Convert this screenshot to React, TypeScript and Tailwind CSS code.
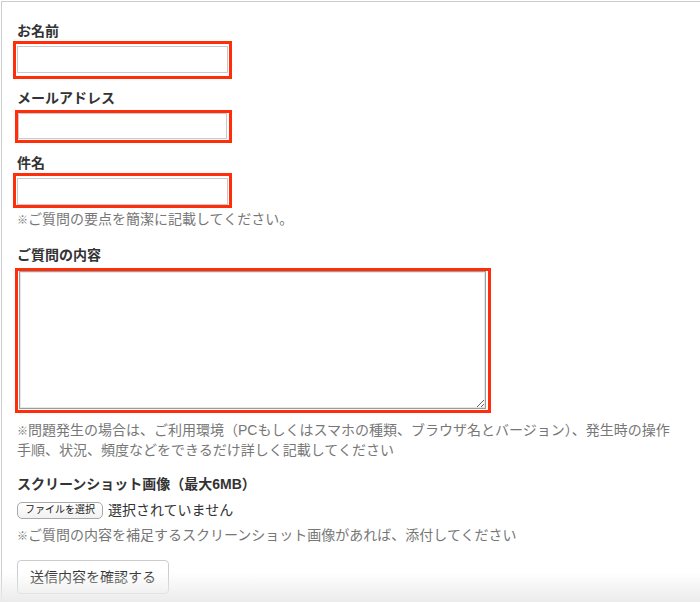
import { useState } from 'react';

const font = "font-['Liberation_Sans','Noto_Sans_CJK_JP',sans-serif]";

const Mark = () => <span className="text-[11px] leading-none">※</span>;

const App = () => {
  const [name, setName] = useState('');
  const [email, setEmail] = useState('');
  const [subject, setSubject] = useState('');
  const [body, setBody] = useState('');

  return (
    <div className={`relative w-[700px] h-[602px] overflow-hidden bg-white ${font}`}>
      {/* 枠 */}
      <div className="ml-px mt-px h-[640px] border-l border-t border-[#cccccc] pl-[15px] pt-[20px]">
        {/* お名前 */}
        <div className="text-[14px] leading-[19px] font-bold text-[#333]">お名前</div>
        <div className="-ml-[4px] w-[219px] border-[3px] border-[#ff2d0a] px-px pt-[2px] pb-[3px]">
          <input
            className="block h-[27px] w-full border border-[#c9c9c9] bg-white px-1 text-[14px] outline-none"
            value={name}
            onChange={(e) => setName(e.target.value)}
          />
        </div>

        {/* メールアドレス */}
        <div className="mt-[9px] text-[14px] leading-[20px] font-bold text-[#333]">メールアドレス</div>
        <div className="mt-[2px] -ml-[2px] w-[217px] border-[3px] border-[#ff2d0a] pr-[2px] pb-px">
          <input
            className="block h-[26px] w-full border border-[#c9c9c9] bg-white px-1 text-[14px] outline-none"
            value={email}
            onChange={(e) => setEmail(e.target.value)}
          />
        </div>

        {/* 件名 */}
        <div className="mt-[10px] text-[14px] leading-[20px] font-bold text-[#333]">件名</div>
        <div className="-ml-[4px] w-[219px] border-[3px] border-[#ff2d0a] px-px pt-[2px]">
          <input
            className="block h-[27px] w-full border border-[#c9c9c9] bg-white px-1 text-[14px] outline-none"
            value={subject}
            onChange={(e) => setSubject(e.target.value)}
          />
        </div>
        <div className="mt-px h-[20px] text-[14px] leading-[20px] text-[#777]">
          <Mark />ご質問の要点を簡潔に記載してください。
        </div>

        {/* ご質問の内容 */}
        <div className="mt-[16px] text-[14px] leading-[20px] font-bold text-[#333]">ご質問の内容</div>
        <div className="mt-[3px] -ml-[2px] w-[476px] border-[3px] border-[#ff2d0a] pl-px pb-px">
          <textarea
            className="block h-[138px] w-[467px] border border-[#9c9c9c] bg-white p-1 text-[14px] shadow-[inset_0_0_0_1px_#e6e6e6] outline-none"
            value={body}
            onChange={(e) => setBody(e.target.value)}
          />
        </div>
        <div className="mt-[7px] h-[40px] text-[14px] leading-[20px] text-[#777]">
          <Mark />問題発生の場合は、ご利用環境（PCもしくはスマホの種類、ブラウザ名とバージョン）、発生時の操作
          <br />
          手順、状況、頻度などをできるだけ詳しく記載してください
        </div>

        {/* スクリーンショット */}
        <div className="mt-[14px] text-[14px] leading-[20px] font-bold text-[#333]">スクリーンショット画像（最大6MB）</div>
        <div className="mt-[5px] flex h-[22px] items-center">
          <button
            type="button"
            className="flex h-[17px] w-[86px] items-center justify-center rounded-[5px] border border-[#a9a9a9] bg-linear-to-b from-white to-[#f1f1f1] text-[10px] leading-none text-[#222]"
          >
            ファイルを選択
          </button>
          <span className="ml-[5px] text-[14px] leading-[20px] text-[#333]">選択されていません</span>
        </div>
        <div className="mt-[4px] h-[20px] text-[14px] leading-[20px] text-[#777]">
          <Mark />ご質問の内容を補足するスクリーンショット画像があれば、添付してください
        </div>

        <button
          type="button"
          className="mt-[15px] flex h-[34px] w-[152px] items-center justify-center rounded-[4px] border border-[#cccccc] bg-white text-[14px] text-[#333]"
        >
          送信内容を確認する
        </button>
      </div>

      {/* 下端のグラデーション */}
      <div className="pointer-events-none absolute bottom-0 left-0 h-[30px] w-full bg-linear-to-b from-transparent to-[#ebebeb]" />
    </div>
  );
};

export default App;
